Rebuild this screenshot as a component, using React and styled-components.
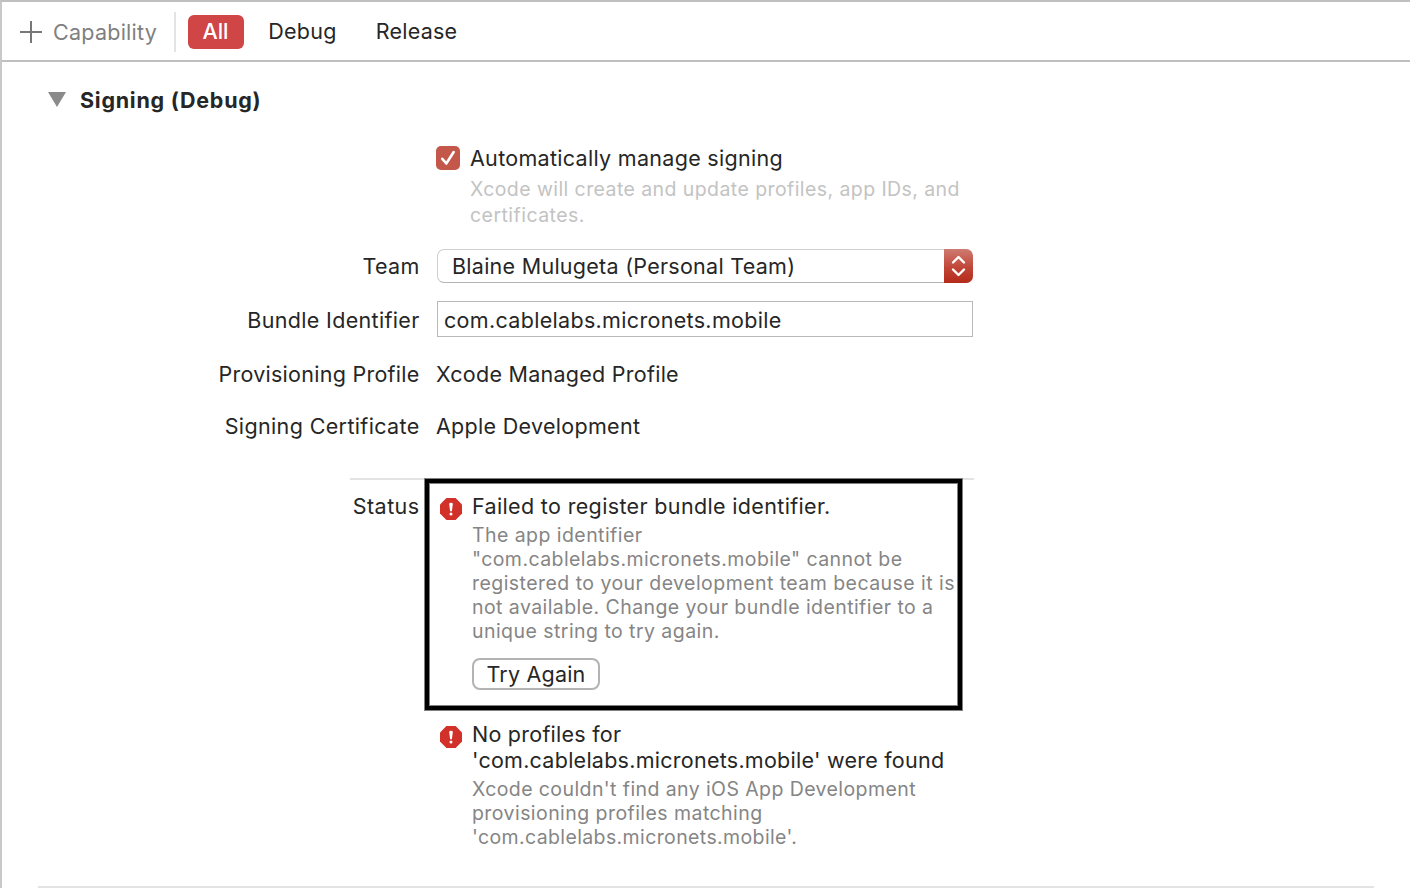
import React, { useState } from "react";
import styled, { createGlobalStyle } from "styled-components";

const GlobalStyle = createGlobalStyle`
  * {
    box-sizing: border-box;
  }

  body {
    margin: 0;
    background: #fff;
    font-family: Inter, "Liberation Sans", sans-serif;
    font-size: 21.5px;
    color: #262626;
  }
`;

const Editor = styled.div`
  height: 888px;
  overflow: hidden;
  border-top: 2px solid #bfbfbf;
  border-left: 2px solid #c8c8c8;
  display: flex;
  flex-direction: column;
`;

const Toolbar = styled.div`
  display: flex;
  align-items: center;
  flex: none;
  height: 60px;
  padding: 2px 0 0 18px;
  border-bottom: 2px solid #bfbfbf;
`;

const AddCapability = styled.button`
  display: flex;
  align-items: center;
  gap: 10px;
  width: 154px;
  padding: 0;
  border: 0;
  background: none;
  font: inherit;
  color: #808080;
  white-space: nowrap;
  letter-spacing: ${({ $spacing }) => $spacing || 0}px;

  svg {
    flex: none;
  }
`;

const ToolbarDivider = styled.div`
  width: 2px;
  height: 40px;
  margin-right: 12px;
  background: #e3e3e3;
`;

const Tab = styled.button`
  height: 34px;
  width: ${({ $width }) => $width}px;
  margin-right: 12px;
  padding: 0 1px 3px 0;
  border: 0;
  border-radius: 6px;
  background: ${({ $active }) => ($active ? "#d04545" : "transparent")};
  color: ${({ $active }) => ($active ? "#fff" : "#262626")};
  font: inherit;
  font-weight: ${({ $active }) => ($active ? 500 : 400)};
  letter-spacing: ${({ $spacing }) => $spacing || 0}px;
`;

const SectionHeader = styled.div`
  display: flex;
  align-items: center;
  flex: none;
  gap: 14px;
  height: 76px;
  padding-left: 46px;

  svg {
    margin-bottom: 2px;
  }
`;

const SectionTitle = styled.h2`
  margin: 0;
  font-size: 21.5px;
  font-weight: 700;
  letter-spacing: ${({ $spacing }) => $spacing || 0}px;
`;

const Form = styled.div`
  display: flex;
  flex-direction: column;
  flex: none;
  width: 972px;
  padding-top: 7px;
`;

const Row = styled.div`
  display: grid;
  grid-template-columns: 417.6px 538px;
  column-gap: 16.4px;
  align-items: ${({ $top }) => ($top ? "start" : "center")};
  height: ${({ $height }) => $height}px;
`;

const Line = styled.span`
  display: block;
  line-height: 26px;
  white-space: nowrap;
  letter-spacing: ${({ $spacing }) => $spacing || 0}px;
`;

const Label = styled(Line)`
  text-align: right;
`;

const HintLine = styled(Line)`
  font-size: 19.5px;
  line-height: ${({ $height }) => $height || 24}px;
  color: ${({ $faint }) => ($faint ? "#c3c3c3" : "#858585")};
`;

const CheckRow = styled.div`
  grid-column: 2;
  display: flex;
  gap: 10px;
`;

const Checkbox = styled.button`
  display: flex;
  flex: none;
  width: 24px;
  height: 24px;
  margin-top: 1px;
  padding: 0;
  border: 0;
  border-radius: 5px;
  background: #c2574a;
`;

const CheckHint = styled.div`
  margin-top: 5px;
`;

const Select = styled.div`
  display: flex;
  align-items: center;
  justify-content: space-between;
  width: 536px;
  height: 34px;
  margin-left: 1px;
  padding-left: 14px;
  border: 1px solid #cfcfcf;
  border-right: 0;
  border-bottom-color: #b4b4b4;
  border-radius: 7px;
`;

const Stepper = styled.div`
  display: flex;
  width: 29px;
  height: 34px;
  border-radius: 0 7px 7px 0;
  background: linear-gradient(#cf7b71, #c04637 55%, #b52a1a);
`;

const TextField = styled.input`
  width: 536px;
  height: 36px;
  margin: 0 0 1px 1px;
  padding: 2px 6px 0;
  border: 1px solid #b9b9b9;
  border-radius: 0;
  outline: 0;
  font: inherit;
  color: inherit;
  letter-spacing: ${({ $spacing }) => $spacing || 0}px;
`;

const FormDivider = styled.div`
  height: 2px;
  margin: 19px 0 13px 348px;
  background: #e3e3e3;
`;

const Issues = styled.div`
  padding: 0 0 0 4px;
`;

const Issue = styled.div`
  position: relative;
  display: flex;
  gap: 10px;
  height: ${({ $height }) => $height}px;

  > svg {
    flex: none;
    margin-top: 5px;
  }
`;

const IssueDetails = styled.div`
  margin-top: 4px;
`;

/* Thick black frame drawn over the first issue */
const Highlight = styled.div`
  position: absolute;
  top: -14px;
  left: -15px;
  width: 537px;
  height: 231px;
  border: 4px solid #000;
  box-shadow: 0 0 0 1px #808080, inset 0 0 0 1px #808080;
  pointer-events: none;
`;

const TryAgain = styled.button`
  width: 128px;
  height: 32px;
  margin-top: 15px;
  padding: 0;
  border: 2px solid #b3b3b3;
  border-radius: 8px;
  background: #fff;
  font: inherit;
  color: inherit;
  letter-spacing: ${({ $spacing }) => $spacing || 0}px;
`;

const SectionDivider = styled.div`
  flex: none;
  height: 2px;
  margin: auto 36px 0 36px;
  background: #e3e3e3;
`;

const ErrorIcon = () => (
  <svg width="22" height="22" viewBox="0 0 22 22">
    <path d="M6.4 0h9.2L22 6.4v9.2L15.6 22H6.4L0 15.6V6.4z" fill="#d13128" />
    <path d="M9.2 6a1.8 1.2 0 0 1 3.6 0l-.9 7.2h-1.8z" fill="#fff" />
    <circle cx="11" cy="16" r="1.5" fill="#fff" />
  </svg>
);

const App = () => {
  const [tab, setTab] = useState("All");
  const [bundleId, setBundleId] = useState("com.cablelabs.micronets.mobile");

  return (
    <>
      <GlobalStyle />
      <Editor>
        <Toolbar>
          <AddCapability $spacing={0.25}>
            <svg width="23" height="22" viewBox="0 0 23 22">
              <path d="M0 11h22M11 0v22" stroke="#777" strokeWidth="2" />
            </svg>
            Capability
          </AddCapability>
          <ToolbarDivider />
          <Tab $width={56} $active={tab === "All"} onClick={() => setTab("All")}>All</Tab>
          <Tab $width={94} $spacing={0.3} $active={tab === "Debug"} onClick={() => setTab("Debug")}>Debug</Tab>
          <Tab $width={110} $spacing={0.25} $active={tab === "Release"} onClick={() => setTab("Release")}>Release</Tab>
        </Toolbar>

        <SectionHeader>
          <svg width="18" height="15" viewBox="0 0 18 15">
            <path d="M0 0h18L9 15z" fill="#8a8a8a" />
          </svg>
          <SectionTitle $spacing={0.75}>Signing (Debug)</SectionTitle>
        </SectionHeader>

        <Form>
          <Row $top $height={104}>
            <CheckRow>
              <Checkbox aria-label="Automatically manage signing">
                <svg width="24" height="24" viewBox="0 0 24 24">
                  <path d="M6.3 12.8l4 4.7 7.4-11.5" fill="none" stroke="#fff" strokeWidth="2.6" strokeLinecap="round" strokeLinejoin="round" />
                </svg>
              </Checkbox>
              <div>
                <Line $spacing={0.3}>Automatically manage signing</Line>
                <CheckHint>
                  <HintLine $faint $height={26} $spacing={0.42}>Xcode will create and update profiles, app IDs, and</HintLine>
                  <HintLine $faint $height={26} $spacing={0.46}>certificates.</HintLine>
                </CheckHint>
              </div>
            </CheckRow>
          </Row>
          <Row $height={34}>
            <Label $spacing={0.3}>Team</Label>
            <Select>
              <Line $spacing={0.27}>Blaine Mulugeta (Personal Team)</Line>
              <Stepper>
                <svg width="29" height="34" viewBox="0 0 29 34">
                  <path d="M9 13.5l5.5-5.5L20 13.5M9 20.5l5.5 5.5 5.5-5.5" fill="none" stroke="#fff" strokeWidth="2.4" strokeLinecap="round" strokeLinejoin="round" />
                </svg>
              </Stepper>
            </Select>
          </Row>
          <Row $height={73}>
            <Label $spacing={0.33}>Bundle Identifier</Label>
            <TextField $spacing={0.32} value={bundleId} onChange={(e) => setBundleId(e.target.value)} />
          </Row>
          <Row $height={36}>
            <Label $spacing={0.27}>Provisioning Profile</Label>
            <Line $spacing={0.26}>Xcode Managed Profile</Line>
          </Row>
          <Row $height={67}>
            <Label $spacing={0.36}>Signing Certificate</Label>
            <Line $spacing={0.3}>Apple Development</Line>
          </Row>
          <FormDivider />
          <Row $top $height={367}>
            <Label $spacing={0.45}>Status</Label>
            <Issues>
              <Issue $height={228}>
                <ErrorIcon />
                <div>
                  <Line $spacing={0.35}>Failed to register bundle identifier.</Line>
                  <IssueDetails>
                    <HintLine $spacing={0.44}>The app identifier</HintLine>
                    <HintLine $spacing={0.42}>"com.cablelabs.micronets.mobile" cannot be</HintLine>
                    <HintLine $spacing={0.45}>registered to your development team because it is</HintLine>
                    <HintLine $spacing={0.43}>not available. Change your bundle identifier to a</HintLine>
                    <HintLine $spacing={0.45}>unique string to try again.</HintLine>
                  </IssueDetails>
                  <TryAgain $spacing={0.2}>Try Again</TryAgain>
                </div>
                <Highlight />
              </Issue>
              <Issue $height={130}>
                <ErrorIcon />
                <div>
                  <Line $spacing={0.25}>No profiles for</Line>
                  <Line $spacing={0.26}>'com.cablelabs.micronets.mobile' were found</Line>
                  <IssueDetails>
                    <HintLine $spacing={0.41}>Xcode couldn't find any iOS App Development</HintLine>
                    <HintLine $spacing={0.44}>provisioning profiles matching</HintLine>
                    <HintLine $spacing={0.38}>'com.cablelabs.micronets.mobile'.</HintLine>
                  </IssueDetails>
                </div>
              </Issue>
            </Issues>
          </Row>
        </Form>
        <SectionDivider />
      </Editor>
    </>
  );
};

export default App;
